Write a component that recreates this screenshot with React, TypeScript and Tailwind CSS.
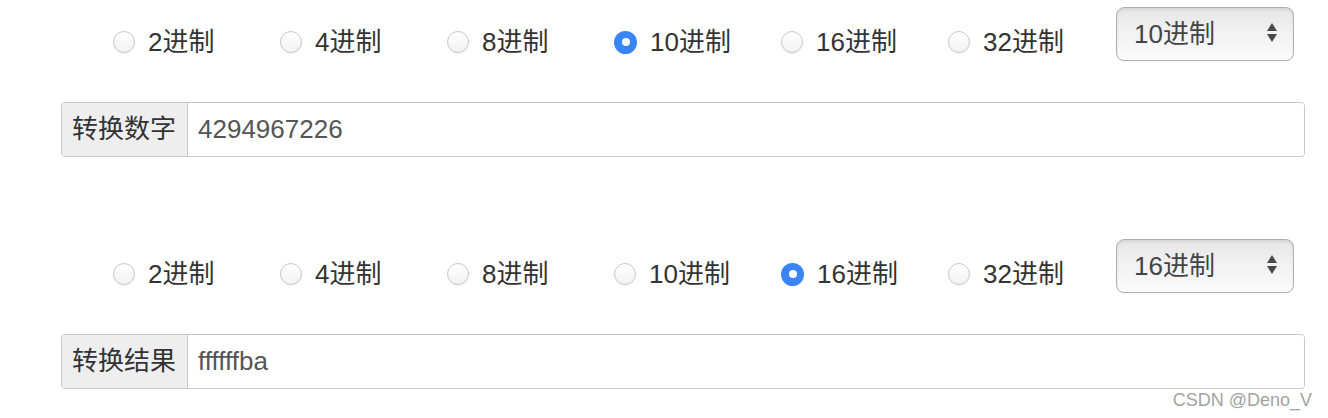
import React from "react";

const bases = ["2进制", "4进制", "8进制", "10进制", "16进制", "32进制"];
const font = { fontFamily: '"Liberation Sans", "Noto Sans CJK SC", sans-serif' };

function Radio({ checked, label }: { checked: boolean; label: string }) {
  return (
    <div className="w-[167px] h-[30px] flex items-center">
      {checked ? (
        <span className="w-[23px] h-[23px] rounded-full bg-[#3a85f6] flex items-center justify-center">
          <span className="w-[8px] h-[8px] rounded-full bg-white" />
        </span>
      ) : (
        <span className="w-[22px] h-[22px] rounded-full border border-[#c8c8c8] bg-linear-to-b from-white to-[#f2f2f2] shadow-[0_1px_1px_rgba(0,0,0,0.06)]" />
      )}
      <span className="ml-[13px] text-[26px] leading-[30px] text-[#333]">{label}</span>
    </div>
  );
}

function FakeSelect({ value }: { value: string }) {
  return (
    <div className="ml-[1px] w-[178px] h-[54px] rounded-[8px] border-[1.5px] border-[#b0b0b0] bg-linear-to-b from-[#e6e6e6] via-[#f2f2f2] to-[#fbfbfb] shadow-[inset_0_2px_3px_rgba(0,0,0,0.08),0_1px_1px_rgba(0,0,0,0.05)] flex items-center pl-[17px] pr-[15px]">
      <span className="flex-1 text-[26px] leading-[30px] text-[#444]">{value}</span>
      <svg width="12" height="24" viewBox="0 0 12 24" className="-mt-[2px]">
        <path d="M6 2 L11 10 L1 10 Z" fill="#4a4a4a" />
        <path d="M1 13 L11 13 L6 21 Z" fill="#4a4a4a" />
      </svg>
    </div>
  );
}

function Block({ selected, label, value }: { selected: string; label: string; value: string }) {
  return (
    <div className="flex flex-col">
      <div className="flex items-start">
        <div className="flex pl-[52px] pt-[20px]">
          {bases.map((b) => (
            <Radio key={b} checked={b === selected} label={b} />
          ))}
        </div>
        <FakeSelect value={selected} />
      </div>
      <div className="mt-[41px] w-[1244px] h-[55px] flex rounded-[4px] border-[1.5px] border-[#c8c8c8] overflow-hidden">
        <div className="w-[126px] bg-[#eeeeee] border-r-[1.5px] border-[#c8c8c8] flex items-center pl-[10px] text-[26px] text-[#333]">
          {label}
        </div>
        <div className="flex-1 bg-white flex items-center pl-[10px] text-[26px] text-[#555]">{value}</div>
      </div>
    </div>
  );
}

export default function App() {
  return (
    <div className="relative w-[1328px] h-[418px] bg-white overflow-hidden" style={font}>
      <div className="flex flex-col pl-[61px] pt-[7px]">
        <Block selected="10进制" label="转换数字" value="4294967226" />
        <div className="h-[82px]" />
        <Block selected="16进制" label="转换结果" value="ffffffba" />
      </div>
      <div className="absolute right-[16px] top-[389px] text-[18px] leading-[22px] text-[#a3a3a3]">CSDN @Deno_V</div>
    </div>
  );
}
